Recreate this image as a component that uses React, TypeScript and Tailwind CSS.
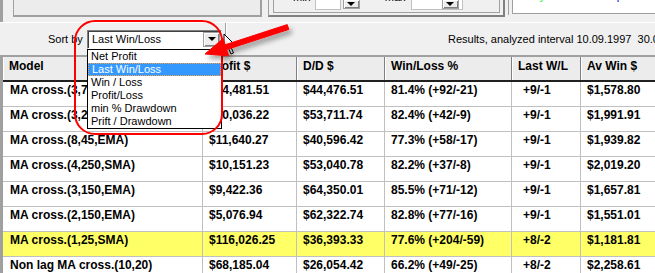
import React from "react"

const rows = [
  ["MA cross.(3,70,SMA)", "$14,481.51", "$44,476.51", "81.4% (+92/-21)", "+9/-1", "$1,578.80"],
  ["MA cross.(3,25,SMA)", "$10,036.22", "$53,711.74", "82.4% (+42/-9)", "+9/-1", "$1,991.91"],
  ["MA cross.(8,45,EMA)", "$11,640.27", "$40,596.42", "77.3% (+58/-17)", "+9/-1", "$1,939.82"],
  ["MA cross.(4,250,SMA)", "$10,151.23", "$53,040.78", "82.2% (+37/-8)", "+9/-1", "$2,019.20"],
  ["MA cross.(3,150,EMA)", "$9,422.36", "$64,350.01", "85.5% (+71/-12)", "+9/-1", "$1,657.81"],
  ["MA cross.(2,150,EMA)", "$5,076.94", "$62,322.74", "82.8% (+77/-16)", "+9/-1", "$1,551.01"],
  ["MA cross.(1,25,SMA)", "$116,026.25", "$36,393.33", "77.6% (+204/-59)", "+8/-2", "$1,181.81"],
  ["Non lag MA cross.(10,20)", "$68,185.04", "$26,054.42", "66.2% (+49/-25)", "+8/-2", "$2,258.61"],
]

const headers = ["Model", "Profit $", "D/D $", "Win/Loss %", "Last W/L", "Av Win $"]
const sortOptions = ["Net Profit", "Last Win/Loss", "Win / Loss", "Profit/Loss", "min % Drawdown", "Prift / Drawdown"]

const gridCols = "grid grid-cols-[200px_94px_88px_127px_69px_90px]"

function DropButton({ className = "" }: { className?: string }) {
  return (
    <div
      className={`flex items-center justify-center border border-[#a0a0a0] bg-[#ececec] shadow-[inset_1px_1px_0_#fff,inset_-1px_-1px_0_#808080] ${className}`}
    >
      <div className="h-0 w-0 border-x-[4px] border-t-[4px] border-x-transparent border-t-black" />
    </div>
  )
}

export default function App() {
  return (
    <div className="relative h-[273px] w-[655px] overflow-hidden bg-[#f0f0f0] font-['Liberation_Sans',Arial,sans-serif] text-black">
      {/* top strip — bottoms of the controls above */}
      <div className="flex h-[22px] overflow-hidden">
        <div className="w-[3px] shrink-0 bg-[#a0a0a0]" />
        <div className="ml-[10px] h-[17px] w-[249px] shrink-0 border-b-2 border-l border-r-2 border-[#a0a0a0] bg-[#ececec]" />
        <div className="ml-[6px] h-[17px] w-[237px] shrink-0 border-b-2 border-l border-r-2 border-l-[#a0a0a0] border-b-[#808080] border-r-[#808080] pl-[4px] pr-[3px] pb-[2px]">
          <div className="flex h-full items-start border-b border-l border-r border-[#a0a0a0]">
            <span className="-mt-[9px] ml-[19px] text-[11px] leading-[12px]">min</span>
            <div className="ml-[4px] h-[10px] w-[26px] border-x border-b border-[#c0c0c0] bg-white" />
            <DropButton className="ml-[2px] h-[9px] w-[17px] border-t-0" />
            <span className="-mt-[9px] ml-[25px] text-[11px] leading-[12px]">max</span>
            <div className="ml-[5px] flex h-[10px] w-[52px] items-start border-x border-b border-[#c0c0c0] bg-white">
              <div className="ml-[30px] w-[20px]">
                <DropButton className="h-[9px] w-[17px] border-t-0" />
              </div>
            </div>
          </div>
        </div>
        <div className="ml-[3px] h-[15px] flex-1 border-l border-[#a0a0a0] pl-[3px] pb-[1px]">
          <div className="flex h-full items-start gap-[14px] border-b border-l border-[#a0a0a0] bg-white pl-[13px] text-[11px] leading-[12px]">
            <span className="-mt-[10px] text-[#00ff00]">Buy</span>
            <span className="-mt-[10px] text-[#ff0000]">Sell</span>
            <span className="-mt-[10px] ml-[9px] text-[#0000ff]">Stop loss</span>
          </div>
        </div>
      </div>

      {/* sort bar */}
      <div className="flex h-[33px] items-stretch border-t border-white text-[11px]">
        <div className="flex items-center pl-[48px]">
          <span className="w-[39px]">Sort by</span>
          <div className="flex h-[19px] w-[135px] items-center border border-t-[#808080] border-l-[#808080] border-b-white border-r-white bg-white shadow-[inset_1px_1px_0_#404040]">
            <span className="flex-1 pl-[4px] pt-[1px]">Last Win/Loss</span>
            <DropButton className="mr-[1px] h-[15px] w-[17px]" />
          </div>
        </div>
        <div className="ml-[3px] w-[2px] border-l border-r border-l-[#a0a0a0] border-r-white" />
        <div className="ml-[221px] flex items-center whitespace-nowrap">
          Results, analyzed interval 10.09.1997&nbsp;&nbsp;30.06.2008
        </div>
      </div>

      {/* results table */}
      <div className="flex">
        <div className="w-[3px] shrink-0 bg-[#a0a0a0]" />
        <div className="flex-1 overflow-hidden border-t-2 border-[#a0a0a0] text-[12px] font-bold">
          <div className={`${gridCols} h-[25px] border-b-2 border-[#202020] bg-[#ececec]`}>
            {headers.map((h) => (
              <div
                key={h}
                className="border-r border-[#808080] pl-[6px] pt-[2px] leading-[14px] shadow-[inset_1px_0_0_#fff]"
              >
                {h}
              </div>
            ))}
          </div>
          {rows.map((r, i) => (
            <div
              key={i}
              className={`${gridCols} h-[25px] border-b border-[#c0c0c0] ${i === 6 ? "bg-[#ffff66]" : "bg-white"}`}
            >
              {r.map((c, j) => (
                <div
                  key={j}
                  className={`whitespace-nowrap border-r border-[#c0c0c0] pt-[1px] leading-[14px] ${
                    j === 4 ? "pl-[11px]" : j === 0 ? "pl-[7px]" : "pl-[6px]"
                  }`}
                >
                  {c}
                </div>
              ))}
            </div>
          ))}
        </div>
      </div>

      {/* open combobox list */}
      <div className="absolute left-[87px] top-[49px] w-[135px] border border-black bg-white text-[11px] leading-[13px]">
        {sortOptions.map((o) => (
          <div
            key={o}
            className={`h-[13px] pl-[3px] ${
              o === "Last Win/Loss" ? "border border-dotted border-[#ffa040] bg-[#3399ff] pl-[2px] leading-[11px] text-white" : ""
            }`}
          >
            {o}
          </div>
        ))}
      </div>

      {/* annotation: red outline, arrow, mouse pointer */}
      <svg className="pointer-events-none absolute inset-0" width="655" height="273" viewBox="0 0 655 273">
        <defs>
          <filter id="sh" x="-20%" y="-50%" width="140%" height="200%">
            <feDropShadow dx="3" dy="4" stdDeviation="2.5" floodColor="#000" floodOpacity="0.35" />
          </filter>
        </defs>
        <path d="M224 34 L224 51 L228 47 L231 54 L233.5 53 L230.5 46 L236 46 Z" fill="#fff" stroke="#000" strokeWidth="1" />
        <rect x="75" y="21" width="147" height="113" rx="20" fill="none" stroke="#ff0000" strokeWidth="2" />
        <path
          d="M287.2 24.6 L225.1 44.8 L223.1 38.6 L205 54 L228.7 55.8 L226.7 49.6 L288.8 29.4 Z"
          fill="#ff0000"
          stroke="#ff0000"
          strokeWidth="1"
          strokeLinejoin="round"
          filter="url(#sh)"
        />
      </svg>
    </div>
  )
}
